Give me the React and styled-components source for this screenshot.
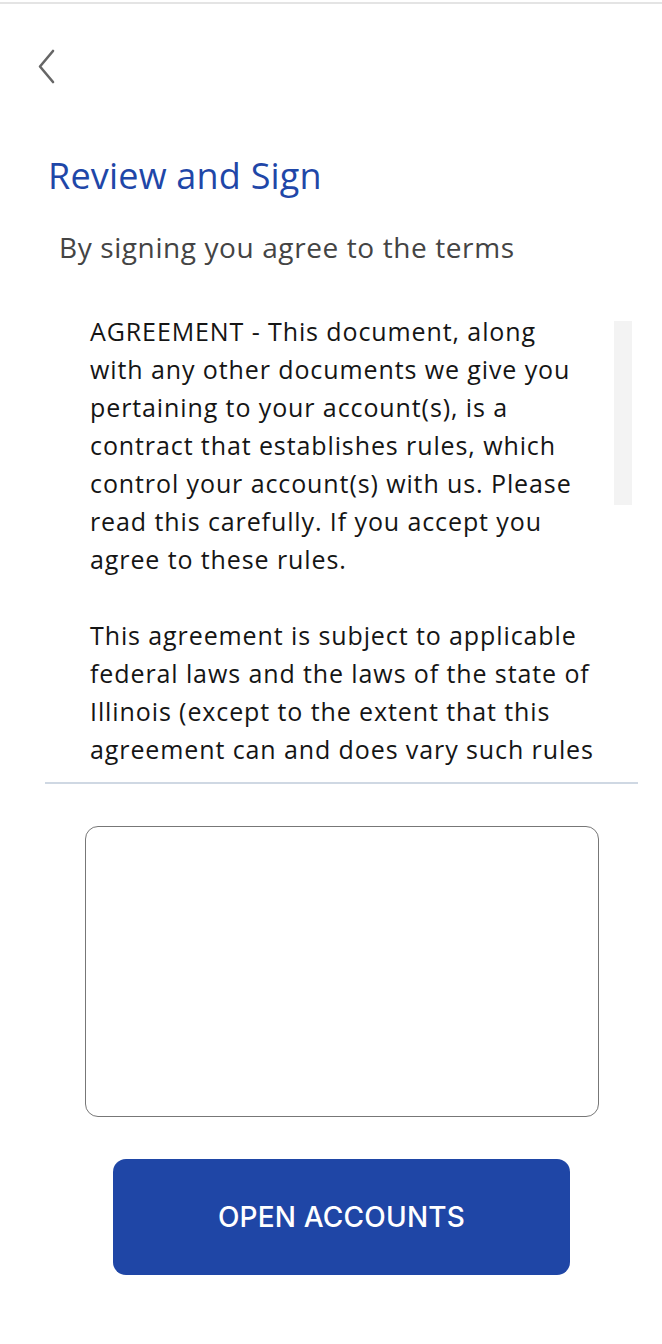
import React from 'react';
import styled, { createGlobalStyle } from 'styled-components';

const GlobalStyle = createGlobalStyle`
  html, body {
    margin: 0;
    padding: 0;
    background: #fff;
  }
  body {
    font-family: "Open Sans", "Liberation Sans", sans-serif;
  }
`;

const Page = styled.div`
  width: 662px;
  min-height: 1342px;
  margin-top: 2px;
  border-top: 2px solid #e4e4e4;
  box-sizing: border-box;
  display: flex;
  flex-direction: column;
`;

const TopBar = styled.div`
  height: 149px;
  padding: 42px 0 0 38px;
  box-sizing: border-box;
`;

const BackButton = styled.button`
  border: 0;
  background: none;
  padding: 0;
  width: 20px;
  height: 40px;
  cursor: pointer;
  display: flex;
  align-items: center;
`;

const Title = styled.h1`
  margin: 0 0 0 48px;
  font-size: 36px;
  line-height: 46px;
  font-weight: 500;
  letter-spacing: 0.2px;
  color: #1f47a8;
`;

const Subtitle = styled.p`
  margin: 30px 0 0 59px;
  font-size: 28px;
  line-height: 36px;
  letter-spacing: 0.6px;
  color: #444;
`;

const DocWrap = styled.div`
  position: relative;
  margin: 47px 24px 0 45px;
  padding-bottom: 14px;
  border-bottom: 2px solid #cfd8e3;
`;

const DocScroll = styled.div`
  height: 456px;
  overflow-y: auto;
  scrollbar-width: none;
  padding: 0 42px 0 45px;
  box-sizing: border-box;
  font-size: 25px;
  line-height: 38px;
  letter-spacing: 0.9px;
  color: #151515;

  &::-webkit-scrollbar {
    display: none;
  }

  p {
    margin: 0 0 38px;
  }
`;

const ScrollThumb = styled.div`
  position: absolute;
  top: 9px;
  right: 6px;
  width: 18px;
  height: 184px;
  background: #f3f3f3;
`;

const SignatureBox = styled.div`
  margin: 42px 0 0 85px;
  width: 514px;
  height: 291px;
  border: 1.5px solid #777;
  border-radius: 13px;
  box-sizing: border-box;
`;

const PrimaryButton = styled.button`
  margin: 42px 0 0 113px;
  width: 457px;
  height: 116px;
  border: 0;
  border-radius: 13px;
  background: #1f46a6;
  color: #fff;
  font-family: "Inter", "Open Sans", sans-serif;
  font-size: 28px;
  font-weight: 500;
  letter-spacing: 0.2px;
  cursor: pointer;
`;

const BackIcon = () => (
  <svg width="20" height="40" viewBox="0 0 20 40" fill="none">
    <path d="M15 5 L2 20.5 L15 36" stroke="#666" strokeWidth="2.6" strokeLinecap="round" strokeLinejoin="round" />
  </svg>
);

export default function App() {
  return (
    <>
      <GlobalStyle />
      <Page>
        <TopBar>
          <BackButton aria-label="Back">
            <BackIcon />
          </BackButton>
        </TopBar>
        <Title>Review and Sign</Title>
        <Subtitle>By signing you agree to the terms</Subtitle>
        <DocWrap>
          <DocScroll>
            <p>
              AGREEMENT - This document, along with any other documents we give you
              pertaining to your account(s), is a contract that establishes rules, which
              control your account(s) with us. Please read this carefully. If you accept you
              agree to these rules.
            </p>
            <p>
              This agreement is subject to applicable federal laws and the laws of the state
              of Illinois (except to the extent that this agreement can and does vary such
              rules or laws).
            </p>
          </DocScroll>
          <ScrollThumb />
        </DocWrap>
        <SignatureBox />
        <PrimaryButton>OPEN ACCOUNTS</PrimaryButton>
      </Page>
    </>
  );
}
